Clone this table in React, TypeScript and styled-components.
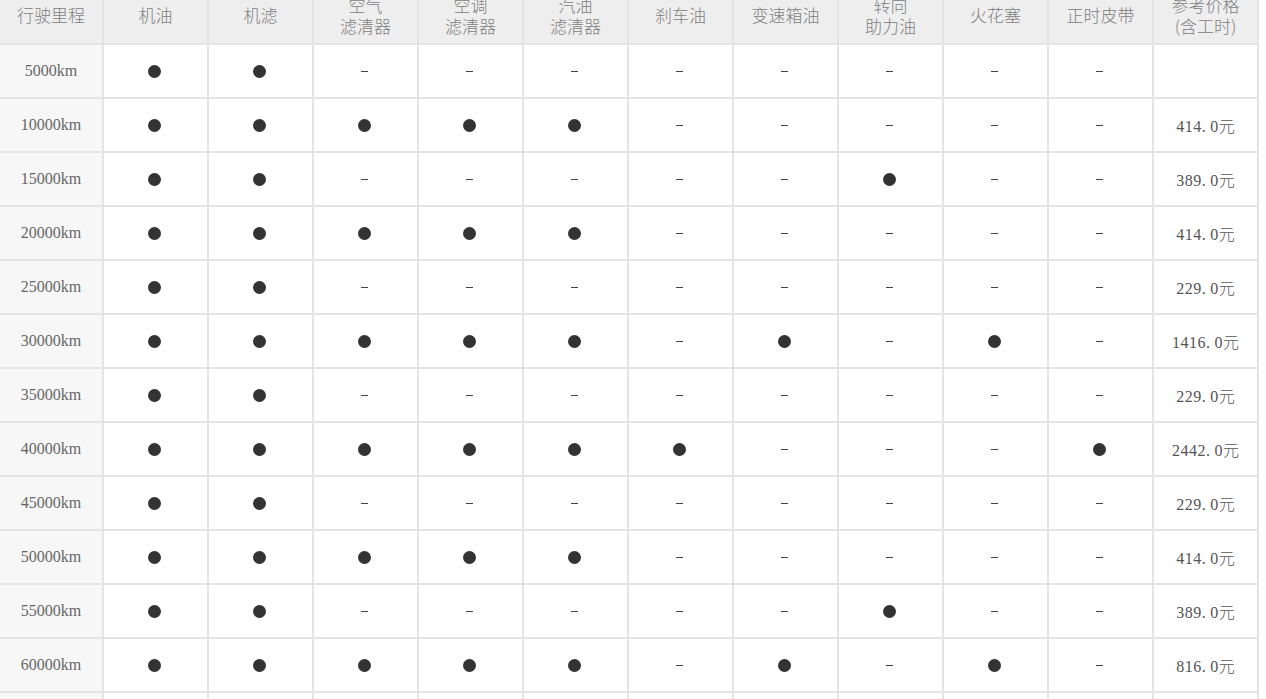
import React from "react";
import styled, { createGlobalStyle } from "styled-components";

const GlobalStyle = createGlobalStyle`
  html, body { margin: 0; padding: 0; background: #ffffff; overflow: hidden; }
  body { font-family: "Liberation Serif", "Noto Sans CJK SC", serif; }
`;

const Page = styled.div`
  width: 1266px;
  height: 699px;
  overflow: hidden;
  background: #ffffff;
`;

const Table = styled.div`
  display: grid;
  grid-template-columns: 102px repeat(11, 103px);
  grid-template-rows: 57px;
  grid-auto-rows: 52px;
  gap: 2px;
  width: max-content;
  background: #e4e4e4;
  padding: 0 2px 2px 0;
  margin-top: -14px;
`;

const HeaderCell = styled.div`
  background: #eeeeee;
  color: #808080;
  font-family: "Noto Sans CJK SC", sans-serif;
  font-weight: 300;
  font-size: 17px;
  line-height: 21px;
  display: flex;
  align-items: center;
  justify-content: center;
  text-align: center;
  white-space: pre-line;
`;

const MileageCell = styled.div`
  background: #f7f7f7;
  color: #666666;
  font-family: "Liberation Serif", serif;
  font-size: 16px;
  display: flex;
  align-items: center;
  justify-content: center;
`;

const Cell = styled.div`
  background: #ffffff;
  display: flex;
  align-items: center;
  justify-content: center;
`;

const Dot = styled.span`
  width: 13px;
  height: 13px;
  border-radius: 50%;
  background: #333333;
  margin-left: -2px;
`;

const Dash = styled.span`
  width: 7px;
  height: 1px;
  background: #444444;
  margin-left: -2px;
`;

const Price = styled.span`
  color: #555555;
  font-family: "Liberation Serif", serif;
  font-size: 16px;
  white-space: nowrap;
  letter-spacing: 0.5px;
`;

const Point = styled.span`
  padding-right: 4px;
`;

const Yuan = styled.span`
  font-family: "Noto Sans CJK SC", sans-serif;
  font-weight: 300;
  font-size: 16px;
  letter-spacing: 0;
`;

const headers = [
  "行驶里程",
  "机油",
  "机滤",
  "空气\n滤清器",
  "空调\n滤清器",
  "汽油\n滤清器",
  "刹车油",
  "变速箱油",
  "转向\n助力油",
  "火花塞",
  "正时皮带",
  "参考价格\n(含工时)",
];

type Row = { km: string; items: string; price: string };

const rows: Row[] = [
  { km: "5000km", items: "1100000000", price: "" },
  { km: "10000km", items: "1111100000", price: "414.0" },
  { km: "15000km", items: "1100000100", price: "389.0" },
  { km: "20000km", items: "1111100000", price: "414.0" },
  { km: "25000km", items: "1100000000", price: "229.0" },
  { km: "30000km", items: "1111101010", price: "1416.0" },
  { km: "35000km", items: "1100000000", price: "229.0" },
  { km: "40000km", items: "1111110001", price: "2442.0" },
  { km: "45000km", items: "1100000000", price: "229.0" },
  { km: "50000km", items: "1111100000", price: "414.0" },
  { km: "55000km", items: "1100000100", price: "389.0" },
  { km: "60000km", items: "1111101010", price: "816.0" },
  { km: "65000km", items: "1100000000", price: "229.0" },
];

function PriceText({ value }: { value: string }) {
  const [whole, frac] = value.split(".");
  return (
    <Price>
      {whole}
      <Point>.</Point>
      {frac}
      <Yuan>元</Yuan>
    </Price>
  );
}

export default function App() {
  return (
    <Page>
      <GlobalStyle />
      <Table>
        {headers.map((h) => (
          <HeaderCell key={h}>{h}</HeaderCell>
        ))}
        {rows.map((r) => (
          <React.Fragment key={r.km}>
            <MileageCell>{r.km}</MileageCell>
            {r.items.split("").map((v, i) => (
              <Cell key={i}>{v === "1" ? <Dot /> : <Dash />}</Cell>
            ))}
            <Cell>{r.price && <PriceText value={r.price} />}</Cell>
          </React.Fragment>
        ))}
      </Table>
    </Page>
  );
}
